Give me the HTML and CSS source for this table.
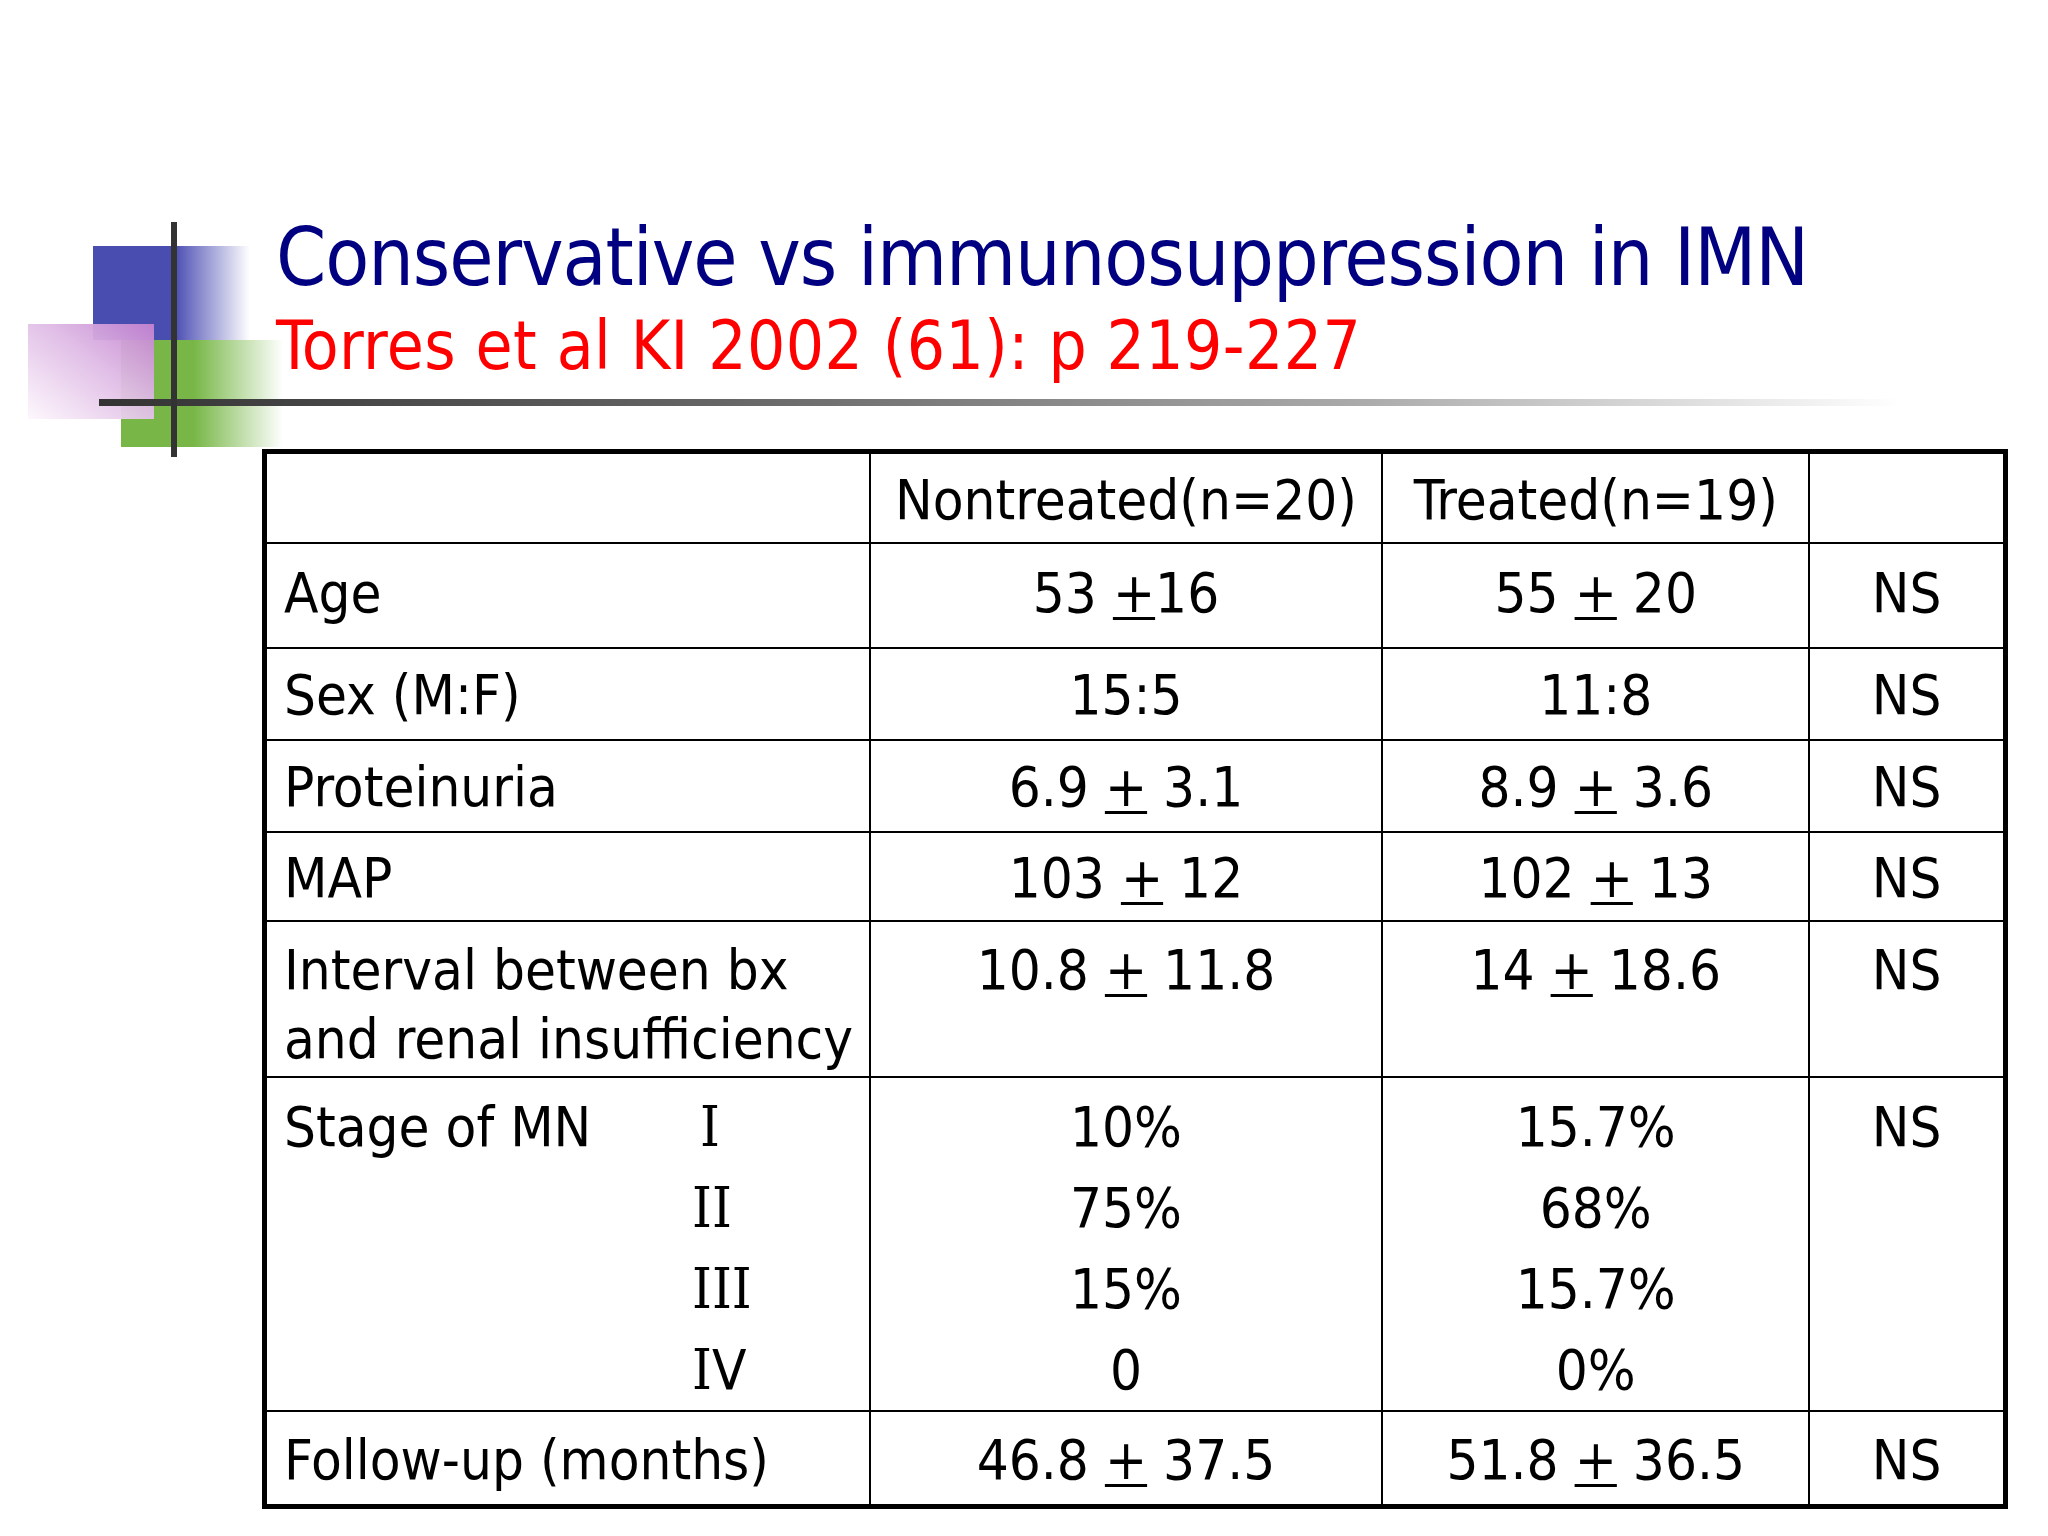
FILE: index.html
```html
<!DOCTYPE html>
<html lang="en">
<head>
<meta charset="utf-8">
<title>Conservative vs immunosuppression in IMN</title>
<link rel="stylesheet" href="styles.css">
</head>
<body>
<div class="slide">
  <svg class="deco" width="1920" height="470" viewBox="0 0 1920 470" aria-hidden="true">
    <defs>
      <linearGradient id="gBlue" x1="0" y1="0" x2="1" y2="0">
        <stop offset="0" stop-color="#4a4db0"/>
        <stop offset="0.52" stop-color="#4a4db0"/>
        <stop offset="0.6" stop-color="#6a6cc0"/>
        <stop offset="1" stop-color="#ffffff"/>
      </linearGradient>
      <linearGradient id="gGreen" x1="0" y1="0" x2="1" y2="0">
        <stop offset="0" stop-color="#78b747"/>
        <stop offset="0.45" stop-color="#78b747"/>
        <stop offset="1" stop-color="#ffffff"/>
      </linearGradient>
      <linearGradient id="gPurple" x1="0" y1="1" x2="1" y2="0">
        <stop offset="0" stop-color="#fdf7fd"/>
        <stop offset="0.55" stop-color="#e0bde6"/>
        <stop offset="1" stop-color="#c482d0"/>
      </linearGradient>
      <linearGradient id="gRule" x1="0" y1="0" x2="1" y2="0">
        <stop offset="0" stop-color="#333333"/>
        <stop offset="0.35" stop-color="#666666"/>
        <stop offset="0.7" stop-color="#aaaaaa"/>
        <stop offset="1" stop-color="#ffffff"/>
      </linearGradient>
    </defs>
    <rect x="93" y="246" width="157" height="94" fill="url(#gBlue)"/>
    <rect x="121" y="340" width="162" height="107" fill="url(#gGreen)"/>
    <rect x="28" y="324" width="126" height="95" fill="url(#gPurple)" opacity="0.95"/>
    <rect x="99" y="399" width="1801" height="7" fill="url(#gRule)"/>
    <rect x="171" y="222" width="6" height="235" fill="#333333"/>
  </svg>

  <header class="titles">
    <h1 class="title">Conservative vs immunosuppression in IMN</h1>
    <p class="subtitle">Torres et al KI 2002 (61): p 219-227</p>
  </header>

  <table class="data">
    <colgroup>
      <col class="c1"><col class="c2"><col class="c3"><col class="c4">
    </colgroup>
    <tbody>
      <tr class="r-head">
        <td></td>
        <td class="ctr">Nontreated(n=20)</td>
        <td class="ctr">Treated(n=19)</td>
        <td></td>
      </tr>
      <tr class="r-age">
        <td class="lbl">Age</td>
        <td class="ctr">53 <span class="pm">+</span>16</td>
        <td class="ctr">55 <span class="pm">+</span> 20</td>
        <td class="ctr">NS</td>
      </tr>
      <tr class="r-sex">
        <td class="lbl">Sex (M:F)</td>
        <td class="ctr">15:5</td>
        <td class="ctr">11:8</td>
        <td class="ctr">NS</td>
      </tr>
      <tr class="r-prot">
        <td class="lbl">Proteinuria</td>
        <td class="ctr">6.9 <span class="pm">+</span> 3.1</td>
        <td class="ctr">8.9 <span class="pm">+</span> 3.6</td>
        <td class="ctr">NS</td>
      </tr>
      <tr class="r-map">
        <td class="lbl">MAP</td>
        <td class="ctr">103 <span class="pm">+</span> 12</td>
        <td class="ctr">102 <span class="pm">+</span> 13</td>
        <td class="ctr">NS</td>
      </tr>
      <tr class="r-int">
        <td class="lbl">Interval between bx<br>and renal insufficiency</td>
        <td class="ctr">10.8 <span class="pm">+</span> 11.8</td>
        <td class="ctr">14 <span class="pm">+</span> 18.6</td>
        <td class="ctr">NS</td>
      </tr>
      <tr class="r-stage">
        <td class="lbl">
          <div class="stage">
            <span class="stage-label">Stage of MN</span>
            <span class="numerals">
              <span class="rn rn-one">I</span>
              <span class="rn">II</span>
              <span class="rn">III</span>
              <span><span class="rn">I</span>V</span>
            </span>
          </div>
        </td>
        <td class="ctr">10%<br>75%<br>15%<br>0</td>
        <td class="ctr">15.7%<br>68%<br>15.7%<br>0%</td>
        <td class="ctr">NS</td>
      </tr>
      <tr class="r-follow">
        <td class="lbl">Follow-up (months)</td>
        <td class="ctr">46.8 <span class="pm">+</span> 37.5</td>
        <td class="ctr">51.8 <span class="pm">+</span> 36.5</td>
        <td class="ctr">NS</td>
      </tr>
    </tbody>
  </table>
</div>
</body>
</html>
```

FILE: styles.css
```css
html, body {
  margin: 0;
  padding: 0;
  background: #ffffff;
}

.slide {
  position: relative;
  width: 2048px;
  height: 1536px;
  box-sizing: border-box;
  padding-top: 218px;
  display: flex;
  flex-direction: column;
  align-items: flex-start;
  font-family: "DejaVu Sans Condensed", "DejaVu Sans", sans-serif;
  font-stretch: condensed;
  overflow: hidden;
}

.deco {
  position: absolute;
  left: 0;
  top: 0;
}

.titles {
  position: relative;
  margin-left: 276px;
}

.title {
  margin: 0;
  font-size: 80px;
  line-height: 80px;
  font-weight: normal;
  color: #000080;
  letter-spacing: -1.05px;
  white-space: nowrap;
}

.subtitle {
  margin: 15px 0 0 0;
  font-size: 67px;
  line-height: 67px;
  color: #ff0000;
  letter-spacing: 0.4px;
  white-space: nowrap;
}

.data {
  position: relative;
  margin-top: 69px;
  margin-left: 262px;
  width: 1746px;
  border-collapse: collapse;
  table-layout: fixed;
  border: 5px solid #000000;
  color: #000000;
  font-size: 56px;
}

.c1 { width: 605px; }
.c2 { width: 512px; }
.c3 { width: 427px; }
.c4 { width: 196px; }

.data td {
  border: 2px solid #000000;
  padding: 3px 0 0 0;
  vertical-align: middle;
  line-height: 1.2;
  white-space: nowrap;
}

.data td.lbl {
  padding-left: 17px;
}

.data td.ctr {
  text-align: center;
}

.pm {
  text-decoration: underline;
  text-decoration-thickness: 3px;
  text-underline-offset: 5px;
}

.r-head { height: 91px; }
.r-age { height: 105px; }
.r-sex { height: 92px; }
.r-prot { height: 92px; }
.r-map { height: 89px; }
.r-int { height: 156px; }
.r-stage { height: 333px; }
.r-follow { height: 96px; }

.r-age td {
  padding-top: 0;
  padding-bottom: 5px;
}

.r-int td {
  vertical-align: top;
  line-height: 69px;
  padding-top: 13px;
  padding-bottom: 0;
}

.r-stage td {
  vertical-align: top;
  line-height: 81px;
  padding-top: 8px;
  padding-bottom: 0;
}

.stage {
  display: flex;
  align-items: flex-start;
}

.stage-label {
  width: 408px;
  flex: none;
}

.numerals {
  display: flex;
  flex-direction: column;
}

.rn {
  font-family: "DejaVu Serif Condensed", "DejaVu Serif", serif;
  font-stretch: condensed;
}

.rn-one {
  padding-left: 8px;
}
```
